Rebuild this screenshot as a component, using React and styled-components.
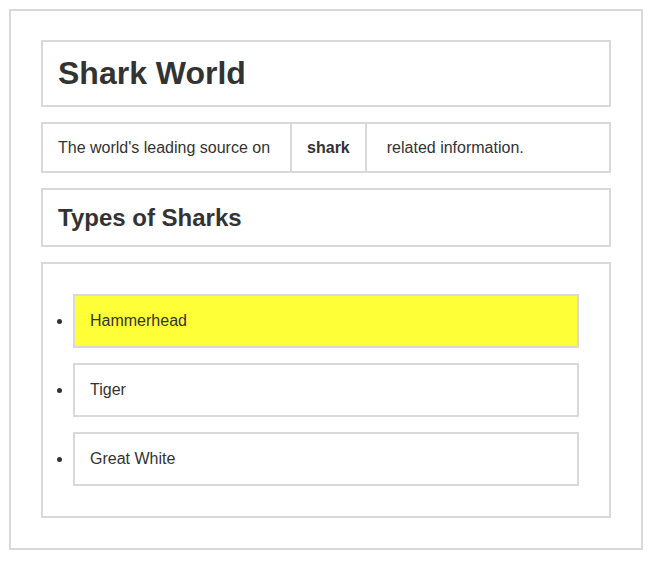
import React from "react";
import styled, { createGlobalStyle } from "styled-components";

const Global = createGlobalStyle`
  html, body { margin: 0; padding: 0; background: #fff; }
  body {
    font-family: "Liberation Sans", Arial, Helvetica, sans-serif;
    color: #333;
  }
`;

const border = "2px solid #d9d9d9";

const Page = styled.div`
  margin: 9px;
  border: ${border};
  padding: 29px 30px 30px;
  display: flex;
  flex-direction: column;
  gap: 15px;
`;

const Box = styled.div`
  border: ${border};
  padding: 15px;
`;

const Title = styled.h1`
  margin: 0;
  font-size: 32px;
  line-height: 33px;
  font-weight: 700;
`;

const Subtitle = styled.h2`
  margin: 0;
  font-size: 24px;
  line-height: 25px;
  font-weight: 700;
`;

const Tagline = styled.p`
  margin: 0;
  border: ${border};
  display: flex;
  font-size: 16px;
  line-height: 17px;
`;

const Cell = styled.span`
  padding: 15px ${(p) => (p.$side === "left" ? "20px" : "15px")} 15px
    ${(p) => (p.$side === "right" ? "20px" : "15px")};
`;

const Strong = styled.strong`
  padding: 15px;
  border-left: ${border};
  border-right: ${border};
  font-weight: 700;
`;

const ListBox = styled.ul`
  margin: 0;
  border: ${border};
  padding: 30px;
  list-style: disc outside;
  display: flex;
  flex-direction: column;
  gap: 15px;
`;

const Item = styled.li`
  display: list-item;
  border: ${border};
  padding: 15px;
  font-size: 16px;
  line-height: 20px;
  background: ${(p) => (p.$highlight ? "#ffff38" : "#fff")};
`;

const sharks = ["Hammerhead", "Tiger", "Great White"];

export default function App() {
  return (
    <>
      <Global />
      <Page>
        <Box>
          <Title>Shark World</Title>
        </Box>
        <Tagline>
          <Cell $side="left">The world's leading source on</Cell>
          <Strong>shark</Strong>
          <Cell $side="right">related information.</Cell>
        </Tagline>
        <Box>
          <Subtitle>Types of Sharks</Subtitle>
        </Box>
        <ListBox>
          {sharks.map((s, i) => (
            <Item key={s} $highlight={i === 0}>
              {s}
            </Item>
          ))}
        </ListBox>
      </Page>
    </>
  );
}
